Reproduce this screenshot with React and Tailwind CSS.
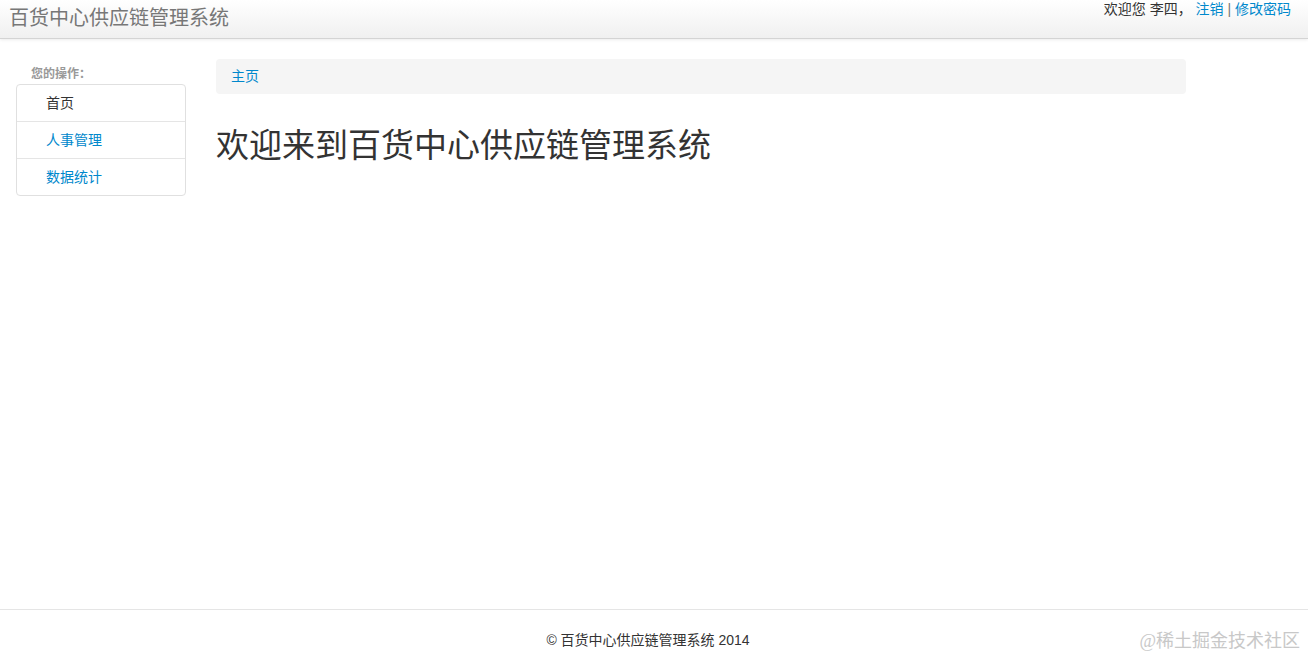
export default function App() {
  const font = { fontFamily: '"Liberation Sans", "Noto Sans CJK SC", sans-serif' };
  return (
    <div className="flex min-h-[659px] flex-col bg-white text-[14px] text-[#333]" style={font}>
      <header className="flex h-[39px] items-start justify-between border-b border-[#d4d4d4] bg-gradient-to-b from-white to-[#f0f0f0] shadow-[0_1px_3px_rgba(0,0,0,0.08)]">
        <div className="pl-[9px] pt-[6px] text-[20px] leading-[24px] text-[#777]">百货中心供应链管理系统</div>
        <div className="pr-[17px] pt-[0px] text-[14px] leading-[18px] text-[#333]">
          欢迎您&nbsp;李四，&nbsp;<a className="text-[#0088cc]">注销</a> <span className="text-[#777]">|</span> <a className="text-[#0088cc]">修改密码</a>
        </div>
      </header>
      <div className="flex flex-1 items-start">
        <aside className="ml-[16px] mt-[25px] w-[170px]">
          <div className="pl-[15px] text-[12px] font-bold leading-[20px] text-[#999]">您的操作：</div>
          <ul className="rounded-[4px] border border-[#e0e0e0] bg-white">
            <li className="flex h-[37px] items-center border-b border-[#e5e5e5] pl-[29px] text-[#333]">首页</li>
            <li className="flex h-[37px] items-center border-b border-[#e5e5e5] pl-[29px] text-[#0088cc]">人事管理</li>
            <li className="flex h-[36px] items-center pl-[29px] text-[#0088cc]">数据统计</li>
          </ul>
        </aside>
        <main className="ml-[30px] mt-[20px] w-[970px]">
          <div className="flex h-[35px] items-center rounded-[4px] bg-[#f5f5f5] pl-[15px] text-[#0088cc]">主页</div>
          <h1 className="mt-[31px] text-[33px] leading-[42px] text-[#333]" style={{ fontFamily: '"Liberation Serif", "Noto Sans CJK SC", serif' }}>
            欢迎来到百货中心供应链管理系统
          </h1>
        </main>
      </div>
      <footer className="relative h-[50px] border-t border-[#e5e5e5] pr-[12px] pt-[20px] text-center text-[14px] leading-[20px] text-[#333]">
        © 百货中心供应链管理系统 2014
        <span className="absolute right-[8px] top-[19px] text-[18px] leading-[24px] text-[#c8c8c8]" style={{ fontFamily: '"Liberation Serif", "Noto Sans CJK SC", serif' }}>@稀土掘金技术社区</span>
      </footer>
    </div>
  );
}
